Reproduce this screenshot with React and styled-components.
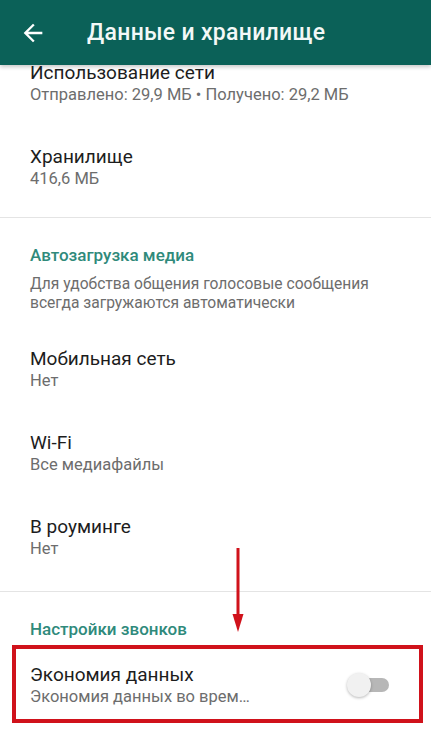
import React from "react";
import styled, { createGlobalStyle } from "styled-components";

const GlobalStyle = createGlobalStyle`
  html, body {
    margin: 0;
    padding: 0;
    background: #ffffff;
  }
  body {
    font-family: Roboto, "Noto Sans", "Liberation Sans", sans-serif;
    -webkit-font-smoothing: antialiased;
  }
  * { box-sizing: border-box; }
`;

const Screen = styled.div`
  position: relative;
  width: 431px;
  height: 739px;
  overflow: hidden;
  background: #ffffff;
`;

const Header = styled.header`
  position: relative;
  z-index: 2;
  height: 65px;
  display: flex;
  align-items: center;
  padding-left: 19px;
  background: #0b6158;
  box-shadow: 0 2px 4px rgba(0, 0, 0, 0.22);
`;

const BackButton = styled.button`
  display: flex;
  align-items: center;
  justify-content: center;
  width: 28px;
  height: 28px;
  padding: 0;
  border: none;
  background: transparent;
  color: #ffffff;
`;

const Title = styled.h1`
  margin: 0 0 0 40px;
  font-size: 23px;
  font-weight: 500;
  color: #f3f8f7;
  letter-spacing: 0.3px;
`;

const List = styled.main`
  position: relative;
  z-index: 1;
  margin-top: -22px;
`;

const Section = styled.section`
  padding-bottom: ${(p) => p.$bottom || 0}px;
  border-bottom: ${(p) => (p.$divider ? "1px solid #e4e4e4" : "none")};
`;

const SectionTitle = styled.h2`
  margin: 0;
  padding: 27px 30px 0;
  font-size: 17px;
  line-height: 20px;
  font-weight: 500;
  color: #2f8a7b;
`;

const Description = styled.p`
  margin: 10px 0 0;
  padding: 0 30px 16px;
  font-size: 15.6px;
  line-height: 19px;
  color: #6d6d6d;
`;

const Item = styled.div`
  position: relative;
  display: flex;
  align-items: center;
  justify-content: space-between;
  height: 84px;
  padding: 18px 30px 22px;
  margin-top: ${(p) => p.$top || 0}px;
`;

const ItemText = styled.div`
  display: flex;
  flex-direction: column;
  min-width: 0;
`;

const ItemTitle = styled.div`
  font-size: 19px;
  line-height: 24px;
  color: #1d1d1d;
`;

const ItemSub = styled.div`
  font-size: 16.5px;
  line-height: 20px;
  color: #6d6d6d;
  white-space: nowrap;
`;

const Switch = styled.div`
  position: relative;
  flex: none;
  width: 37px;
  height: 14px;
  margin-right: 12px;
  border-radius: 7px;
  background: #b7b7b7;

  &::before {
    content: "";
    position: absolute;
    left: -5px;
    top: -5px;
    width: 24px;
    height: 24px;
    border-radius: 50%;
    background: #f1f1f1;
    box-shadow: 0 1px 3px rgba(0, 0, 0, 0.28);
  }
`;

const Highlight = styled.div`
  position: absolute;
  top: 0;
  left: 12px;
  right: 8px;
  height: 78px;
  border: 4px solid #d0121b;
  pointer-events: none;
`;

const Pointer = styled.svg`
  position: absolute;
  z-index: 3;
  left: 231px;
  top: 548px;
`;

const ArrowBack = () => (
  <svg width="28" height="28" viewBox="0 0 24 24" fill="currentColor">
    <path d="M20 11H7.83l5.59-5.59L12 4l-8 8 8 8 1.41-1.41L7.83 13H20v-2z" />
  </svg>
);

const Row = ({ title, sub, toggle, children, top }) => (
  <Item $top={top}>
    <ItemText>
      <ItemTitle>{title}</ItemTitle>
      <ItemSub>{sub}</ItemSub>
    </ItemText>
    {toggle && <Switch />}
    {children}
  </Item>
);

export default function App() {
  return (
    <>
      <GlobalStyle />
      <Screen>
        <Header>
          <BackButton aria-label="Назад">
            <ArrowBack />
          </BackButton>
          <Title>Данные и хранилище</Title>
        </Header>
        <List>
          <Section $divider $bottom={6}>
            <Row
              title="Использование сети"
              sub="Отправлено: 29,9 МБ • Получено: 29,2 МБ"
            />
            <Row title="Хранилище" sub="416,6 МБ" />
          </Section>
          <Section $divider $bottom={10}>
            <SectionTitle>Автозагрузка медиа</SectionTitle>
            <Description>
              Для удобства общения голосовые сообщения
              <br />
              всегда загружаются автоматически
            </Description>
            <Row title="Мобильная сеть" sub="Нет" />
            <Row title="Wi-Fi" sub="Все медиафайлы" />
            <Row title="В роуминге" sub="Нет" />
          </Section>
          <Section>
            <SectionTitle>Настройки звонков</SectionTitle>
            <Row
              top={6}
              title="Экономия данных"
              sub="Экономия данных во врем…"
              toggle
            >
              <Highlight />
            </Row>
          </Section>
        </List>
        <Pointer width="14" height="84" viewBox="0 0 14 84">
          <rect x="5.5" y="0" width="3" height="70" fill="#d0121b" />
          <polygon points="1.5,66 12.5,66 7,84" fill="#d0121b" />
        </Pointer>
      </Screen>
    </>
  );
}
